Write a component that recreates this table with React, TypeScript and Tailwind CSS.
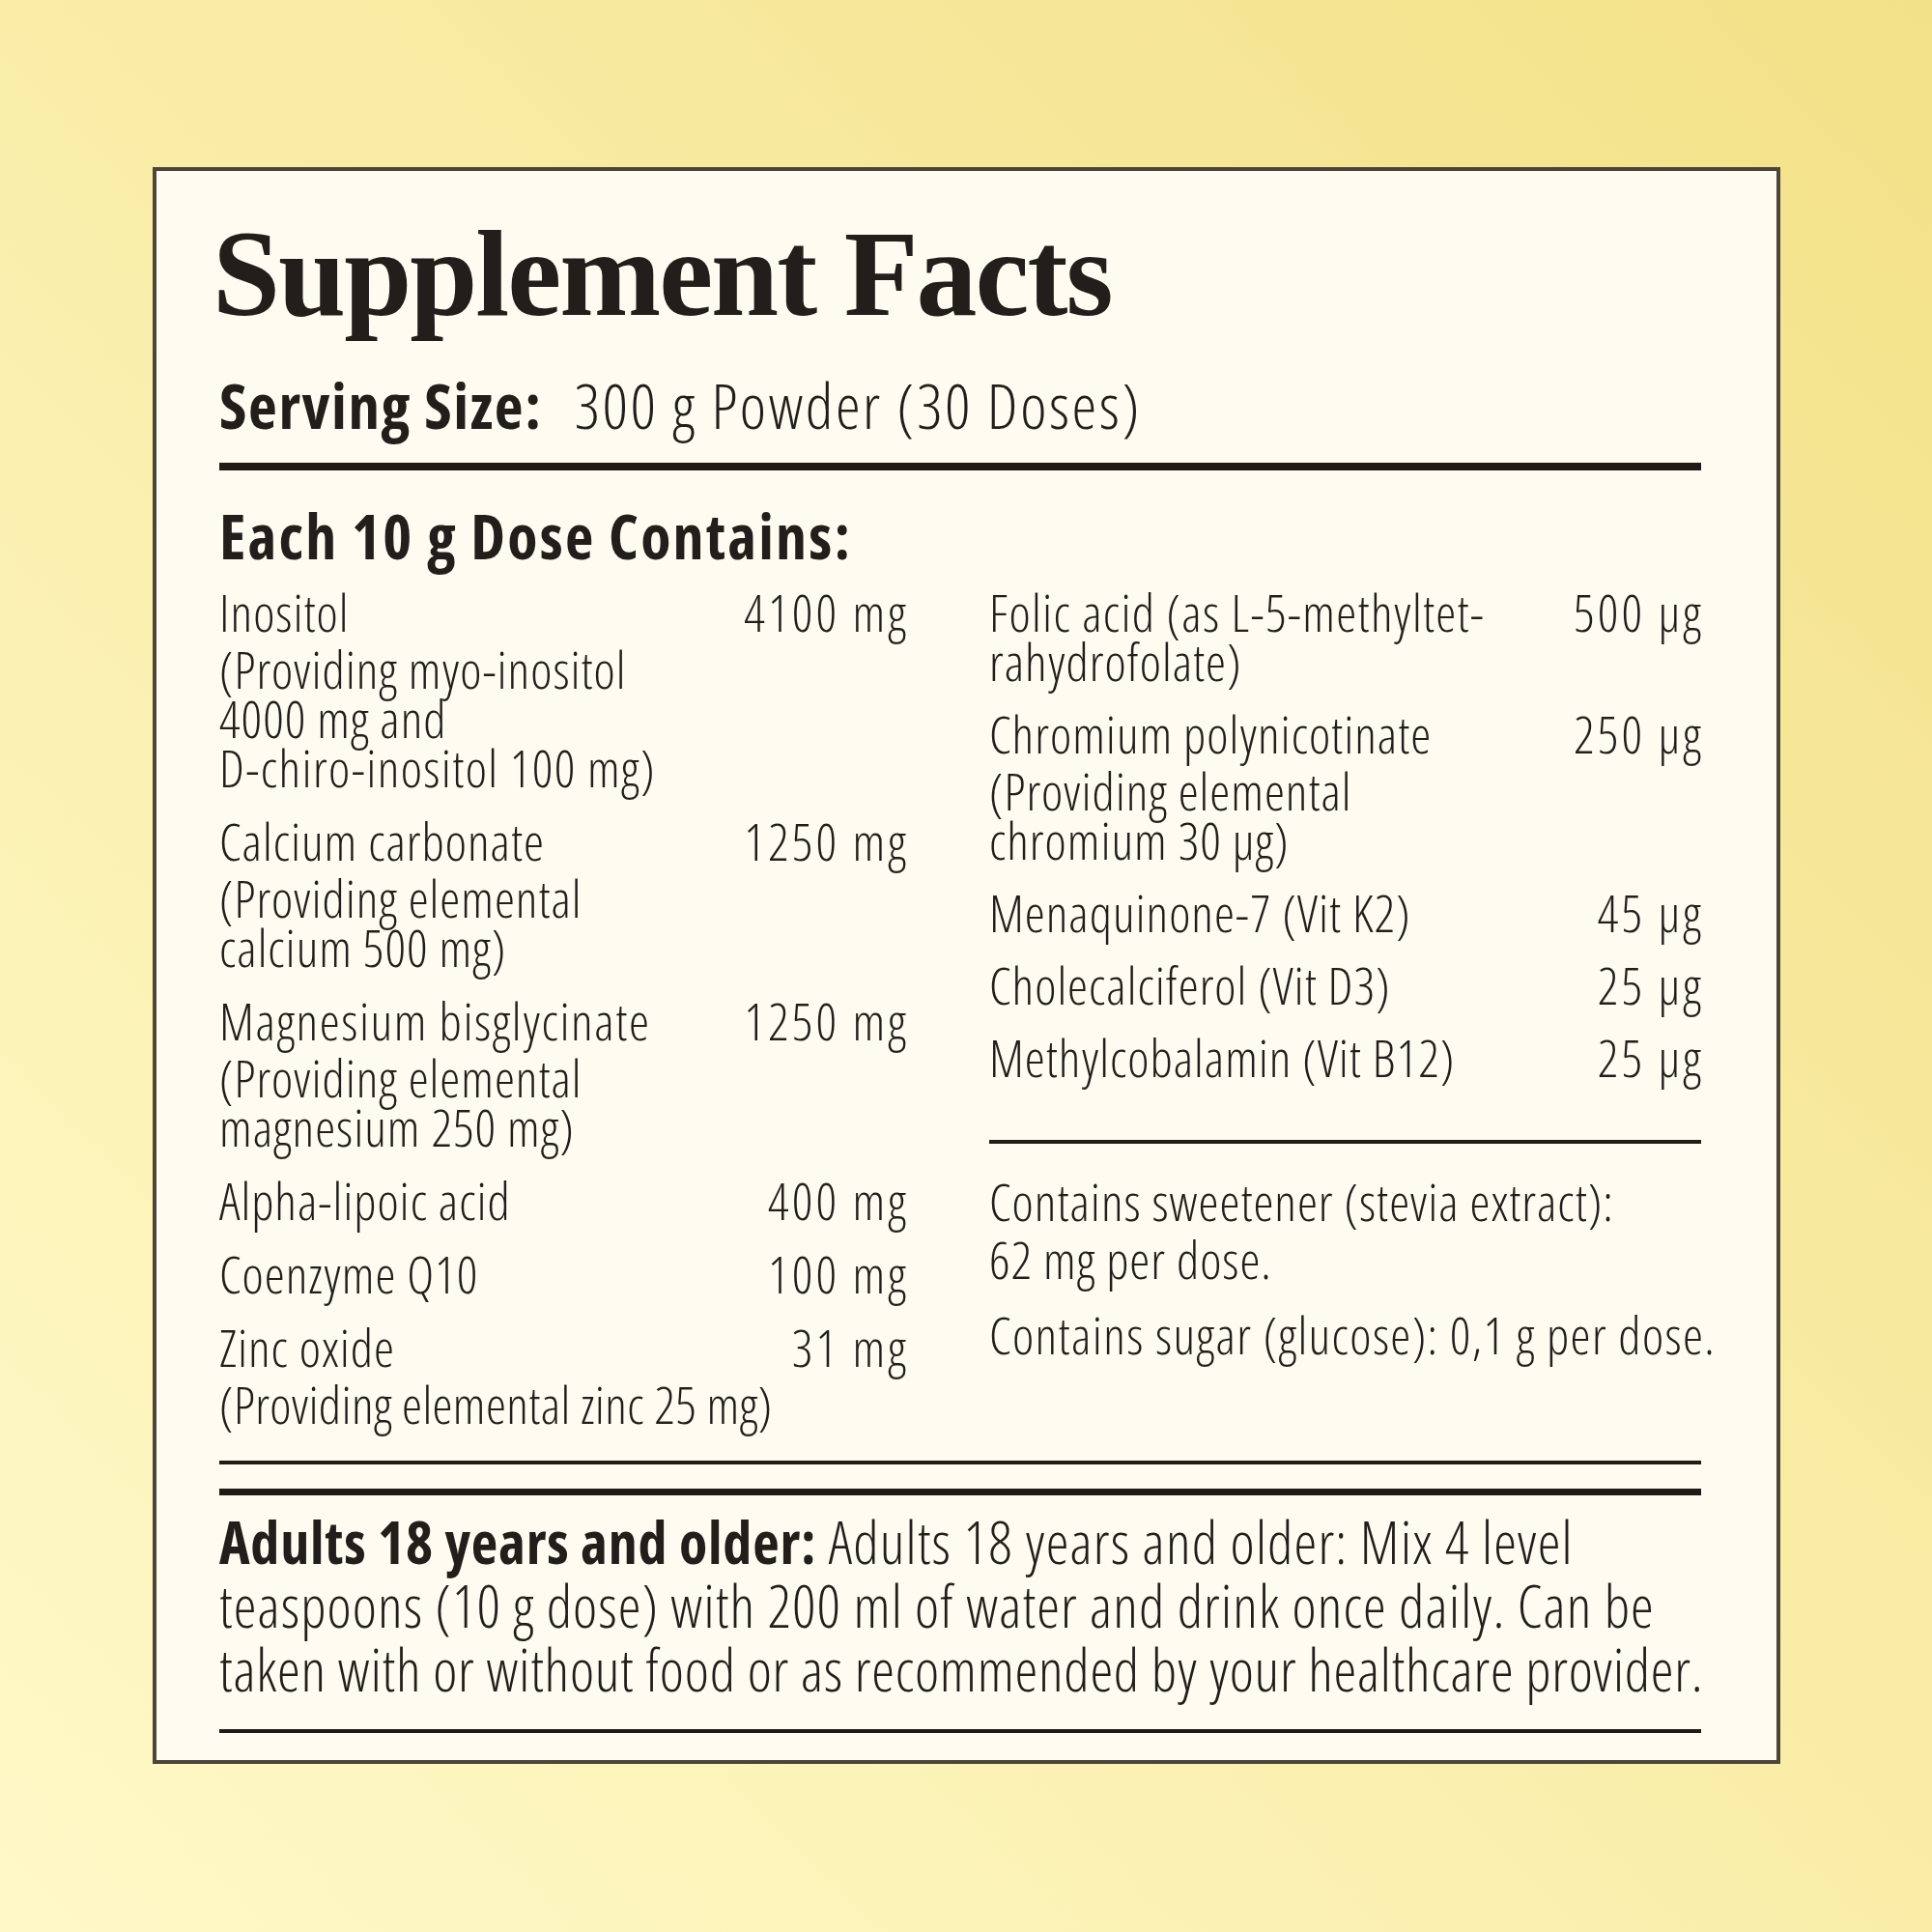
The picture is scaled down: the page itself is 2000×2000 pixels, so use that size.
import React from "react";

type Line = string | { text: string; cls: string };
type Row = { name: Line[]; value: string; desc?: Line[] };

const leftRows: Row[] = [
  {
    name: ["Inositol"],
    value: "4100 mg",
    desc: ["(Providing myo-inositol", "4000 mg and", { text: "D-chiro-inositol 100 mg)", cls: "tracking-[1.4px]" }],
  },
  { name: ["Calcium carbonate"], value: "1250 mg", desc: ["(Providing elemental", "calcium 500 mg)"] },
  {
    name: [{ text: "Magnesium bisglycinate", cls: "tracking-[1.6px]" }],
    value: "1250 mg",
    desc: ["(Providing elemental", "magnesium 250 mg)"],
  },
  { name: ["Alpha-lipoic acid"], value: "400 mg" },
  { name: ["Coenzyme Q10"], value: "100 mg" },
  { name: ["Zinc oxide"], value: "31 mg", desc: [{ text: "(Providing elemental zinc 25 mg)", cls: "tracking-[0.4px]" }] },
];

const rightRows: Row[] = [
  { name: [{ text: "Folic acid (as L-5-methyltet-", cls: "tracking-[1.3px]" }, "rahydrofolate)"], value: "500 µg" },
  { name: ["Chromium polynicotinate"], value: "250 µg", desc: ["(Providing elemental", "chromium 30 µg)"] },
  { name: ["Menaquinone-7 (Vit K2)"], value: "45 µg" },
  { name: ["Cholecalciferol (Vit D3)"], value: "25 µg" },
  { name: ["Methylcobalamin (Vit B12)"], value: "25 µg" },
];

const light =
  "font-['Open_Sans',sans-serif] font-stretch-[75%] font-light text-[53px] leading-[51px] tracking-[1px]";

function Lines({ lines }: { lines: Line[] }) {
  return (
    <>
      {lines.map((l, i) =>
        typeof l === "string" ? (
          <div key={i} className="whitespace-nowrap">
            {l}
          </div>
        ) : (
          <div key={i} className={"whitespace-nowrap " + l.cls}>
            {l.text}
          </div>
        )
      )}
    </>
  );
}

function Ingredient({ row }: { row: Row }) {
  return (
    <div className={light}>
      <div className="flex justify-between items-start">
        <div>
          <Lines lines={row.name} />
        </div>
        <div className="whitespace-nowrap tracking-[3.2px] -mr-[3px]">{row.value}</div>
      </div>
      {row.desc && (
        <div className="mt-2">
          <Lines lines={row.desc} />
        </div>
      )}
    </div>
  );
}

export default function App() {
  return (
    <div className="w-[2000px] h-[2000px] bg-linear-to-tr from-[#fff9c8] to-[#f3e187] pt-[173px] pl-[158px] text-[#221e1b]">
      <div className="w-[1685px] h-[1653px] border-4 border-[#4b4639] bg-[#fefcf0] pl-[65px] pt-[44px]">
        <div className="w-[1534px]">
          <h1 className="font-['Liberation_Serif',serif] font-bold text-[126px] leading-none tracking-[-2px] -ml-[7px]">
            Supplement Facts
          </h1>
          <div className="mt-[40px] text-[65px] leading-none font-['Open_Sans',sans-serif] font-stretch-[75%] whitespace-nowrap">
            <span className="font-bold tracking-[1.6px]">Serving Size:</span>
            <span className="font-light tracking-[2.6px] ml-[18px]"> 300 g Powder (30 Doses)</span>
          </div>
          <div className="mt-[27px] h-[8px] bg-[#1f1b19]" />
          <div className="mt-[36px] font-['Open_Sans',sans-serif] font-stretch-[75%] font-bold text-[64px] leading-none tracking-[2.2px] whitespace-nowrap">
            Each 10 g Dose Contains:
          </div>
          <div className="mt-[21px] flex justify-between">
            <div className="w-[711px] flex flex-col gap-[25px]">
              {leftRows.map((r, i) => (
                <Ingredient key={i} row={r} />
              ))}
            </div>
            <div className="w-[737px] flex flex-col">
              <div className="flex flex-col gap-[24px]">
                {rightRows.map((r, i) => (
                  <Ingredient key={i} row={r} />
                ))}
              </div>
              <div className="mt-[60px] h-[4px] bg-[#1f1b19]" />
              <div className={light + " mt-[30px]"}>
                <div className="leading-[60px]">
                  <div className="whitespace-nowrap">Contains sweetener (stevia extract):</div>
                  <div>62 mg per dose.</div>
                </div>
                <div className="mt-[22px] whitespace-nowrap tracking-[1.4px]">Contains sugar (glucose): 0,1 g per dose.</div>
              </div>
            </div>
          </div>
          <div className="mt-[33px] h-[4px] bg-[#1f1b19]" />
          <div className="mt-[25px] h-[7px] bg-[#1f1b19]" />
          <div className="mt-[15px] font-['Open_Sans',sans-serif] font-stretch-[75%] text-[60px] leading-[66px] whitespace-nowrap">
            <div>
              <span className="font-bold tracking-[0.8px]">Adults 18 years and older:</span>
              <span className="font-light tracking-[1.2px]"> Adults 18 years and older: Mix 4 level</span>
            </div>
            <div className="font-light tracking-[1.1px]">teaspoons (10 g dose) with 200 ml of water and drink once daily. Can be</div>
            <div className="font-light tracking-[0.75px]">taken with or without food or as recommended by your healthcare provider.</div>
          </div>
          <div className="mt-[29px] h-[4px] bg-[#1f1b19]" />
        </div>
      </div>
    </div>
  );
}
